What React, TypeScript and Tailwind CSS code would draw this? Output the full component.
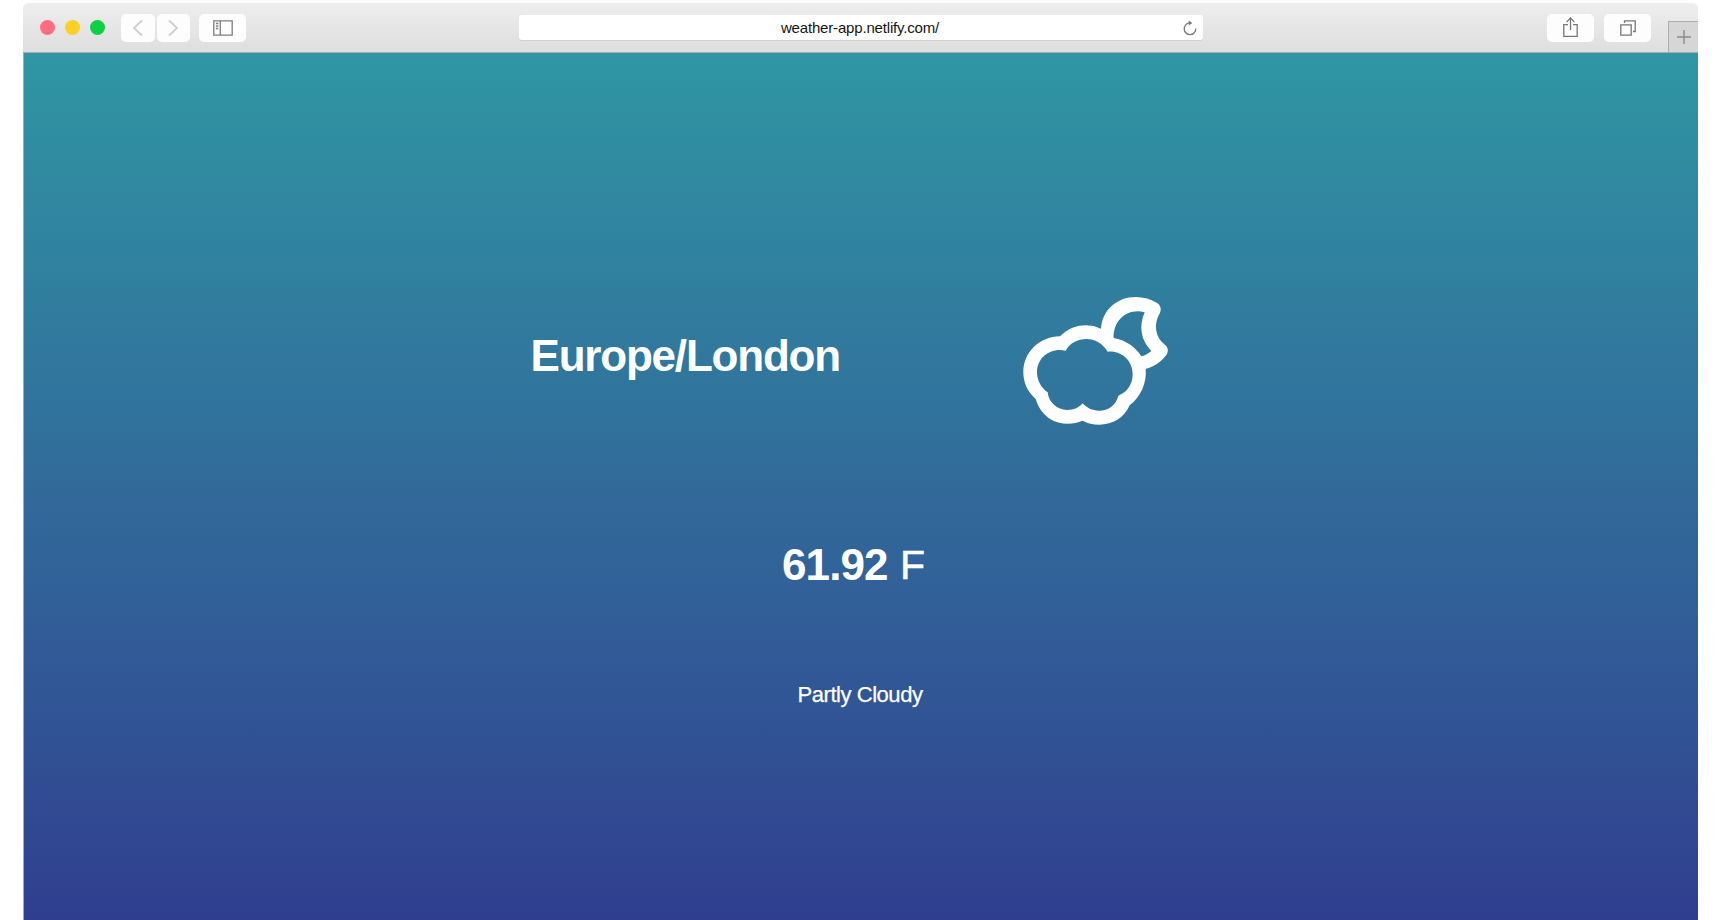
import type { ReactNode } from 'react';

function ToolbarButton({ children, className }: { children: ReactNode; className: string }) {
  return (
    <button className={`flex h-[28.5px] items-center justify-center rounded-[5px] bg-[#fdfdfd] ${className}`}>
      {children}
    </button>
  );
}

function BrowserBar() {
  return (
    <header className="flex h-[49.5px] items-start rounded-t-[5px] border-b border-[#a9adad] bg-linear-to-b from-[#eeeeee] to-[#dedede] pt-[10.5px]">
      <div className="ml-[16.5px] mt-[6px] flex gap-[10px]">
        <span className="size-[15.3px] rounded-full bg-[#fd6d82]" />
        <span className="size-[15.3px] rounded-full bg-[#fdcf25]" />
        <span className="size-[15.3px] rounded-full bg-[#0dd142]" />
      </div>
      <div className="ml-[15.5px] flex gap-[2px]">
        <ToolbarButton className="w-[34px]">
          <svg className="mr-[1px] h-[18px] w-[11px]" viewBox="0 0 11 18" fill="none" stroke="#cdcdcd" strokeWidth="1.8">
            <path d="M10 1.5 2 9l8 7.5" />
          </svg>
        </ToolbarButton>
        <ToolbarButton className="w-[33.5px]">
          <svg className="h-[18px] w-[11px]" viewBox="0 0 11 18" fill="none" stroke="#cdcdcd" strokeWidth="1.8">
            <path d="M1 1.5 9 9l-8 7.5" />
          </svg>
        </ToolbarButton>
      </div>
      <ToolbarButton className="ml-[8.5px] w-[47px]">
        <svg className="ml-[1px] h-[16px] w-[20px]" viewBox="0 0 20 16" fill="none" stroke="#7d7d7d" strokeWidth="1.3">
          <path d="M.8.8h18.4v14.4H.8zM7.3.8v14.4" />
          <path d="M2.9 3.5h2.4M2.9 6h2.4M2.9 8.5h2.4" />
        </svg>
      </ToolbarButton>
      <div className="ml-[273px] mt-[1px] flex h-[25px] w-[684px] items-center rounded-[3px] bg-white shadow-[0_1px_0_#d2d2d2]">
        <span className="ml-[262px] flex-1 text-[15px] leading-[25px] tracking-[-0.17px] text-[#151515]">
          weather-app.netlify.com/
        </span>
        <svg className="mr-[6px] mt-[2px] h-[16px] w-[14px]" viewBox="0 0 14 16" fill="none">
          <path d="M8.2 3.1A5.8 5.8 0 1 0 12.8 8.6" stroke="#777" strokeWidth="1.3" />
          <path d="M5.8.4 9.3 3 5.8 5.4z" fill="#777" />
        </svg>
      </div>
      <ToolbarButton className="ml-[344px] w-[47px]">
        <svg className="mb-[1px] h-[20px] w-[15px]" viewBox="0 0 15 20" fill="none" stroke="#777" strokeWidth="1.3">
          <path d="M5 7.6H.8v11.7h13.4V7.6H10M7.5 13V1M3.6 5.1 7.5.9l3.9 4.2" />
        </svg>
      </ToolbarButton>
      <ToolbarButton className="ml-[10px] w-[47px]">
        <svg className="ml-[2px] h-[16px] w-[16px]" viewBox="0 0 16 16" fill="none" stroke="#777" strokeWidth="1.3">
          <path d="M.8 4.8h10.4v10.4H.8zM4.5 3V.8h10.7v10.7H13" />
        </svg>
      </ToolbarButton>
      <button className="ml-[17px] mt-[7px] flex h-[31px] flex-1 items-center justify-center border-t border-l border-[#adadad] bg-[#d6d6d6]">
        <svg className="ml-[1px] h-[14px] w-[14px]" viewBox="0 0 14 14" fill="none" stroke="#8b8b8b" strokeWidth="1.4">
          <path d="M7 0v14M0 7h14" />
        </svg>
      </button>
    </header>
  );
}

function CloudyNightIcon() {
  return (
    <svg className="h-[160px] w-[190px]" viewBox="0 0 570 480" fill="white" fillRule="evenodd">
      <path d="M180 169A106 106 0 0 1 303 146C306 91 350 51 408 51C431 51 453 57 471 69C481 75 485 87 480 98C460 131 465 170 493 193C504 201 507 214 499 225C483 247 460 261 437 267C441 308 422 351 389 376C374 412 339 434 297 434C279 434 262 430 248 422C234 428 219 431 203 431C183 431 165 426 149 416C128 402 115 382 107 357C82 335 70 308 70 277C70 217 118 170 180 169Z M197 212C149 202 111 235 111 277C111 301 123 323 143 337C146 367 171 390 202 390C221 390 237 383 248 370C260 384 277 392 297 392C326 392 348 374 355 347C382 337 398 312 398 283C398 241 364 211 323 215C308 190 285 177 259 177C233 177 210 189 197 212Z M341 174C376 180 406 200 424 229C435 226 445 221 454 213C422 181 416 139 434 97C385 83 339 119 341 174Z" />
    </svg>
  );
}

export default function App() {
  return (
    <div className="h-[920px] w-[1730px] overflow-hidden bg-white pt-[3px] pr-[32px] pl-[23px] font-['Liberation_Sans',Arial,sans-serif] text-white">
      <BrowserBar />
      <main className="flex h-[867.5px] flex-col border-l border-[#8fb0c8] bg-linear-to-b from-[#2f96a3] to-[#303e8f]">
        <section className="flex pt-[227.5px] pl-[505.5px]">
          <h1 className="w-[470.5px] pt-[51px] pl-[1px] text-[44px] leading-[50px] font-bold tracking-[-1.2px] whitespace-nowrap">
            Europe/London
          </h1>
          <CloudyNightIcon />
        </section>
        <section className="flex items-baseline pt-[100px] pl-[758px]">
          <h2 className="w-[118px] text-[44px] leading-[50px] font-bold tracking-[-0.9px]">61.92</h2>
          <span className="relative top-[-1.5px] text-[41px] leading-[46px] [-webkit-text-stroke:0.5px_white]">F</span>
        </section>
        <p className="pt-[92px] pl-[773.5px] text-[22px] leading-[26px] tracking-[-0.45px] [-webkit-text-stroke:0.25px_white]">
          Partly Cloudy
        </p>
      </main>
    </div>
  );
}
